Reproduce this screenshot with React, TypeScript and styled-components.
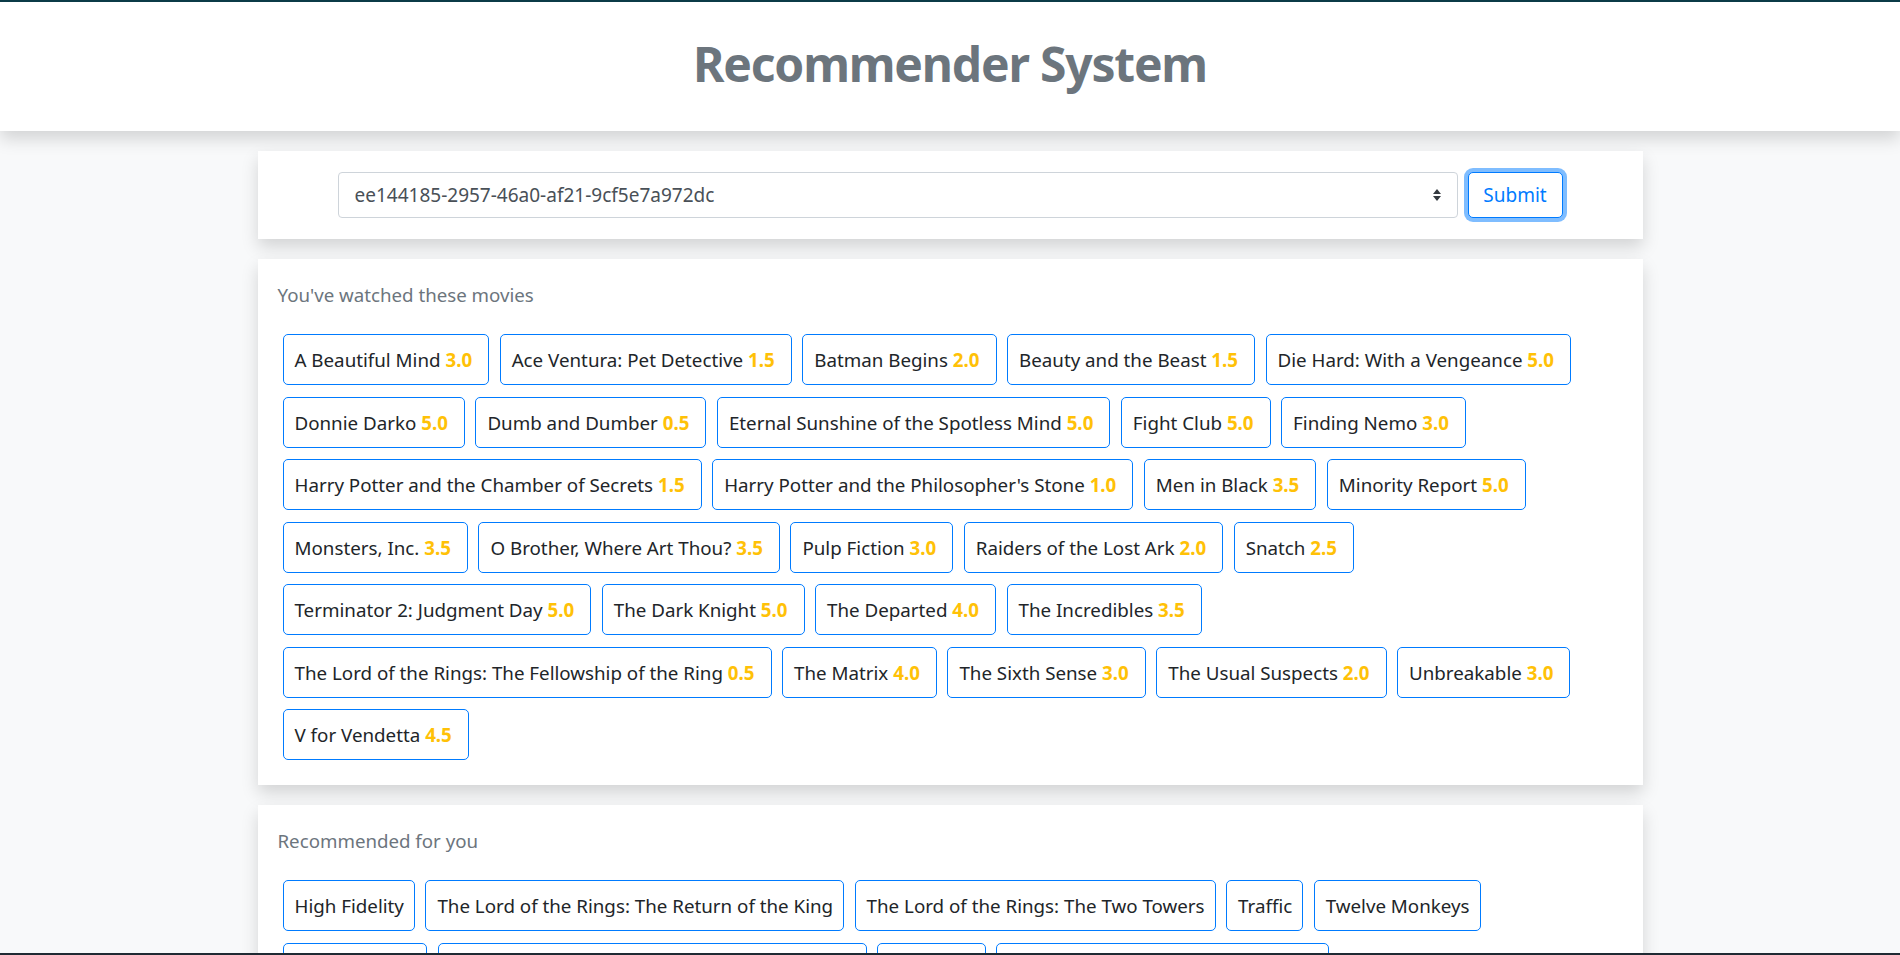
import styled, { createGlobalStyle } from "styled-components";

const GlobalStyle = createGlobalStyle`
    html, body {
        margin: 0;
        padding: 0;
        background: #f8f9fa;
        font-family: "Noto Sans", "Open Sans", sans-serif;
        color: #212529;
    }
    * { box-sizing: border-box; }
`;

type Movie = { title: string; rating?: string };

const watched: Movie[] = [
    { title: "A Beautiful Mind", rating: "3.0" },
    { title: "Ace Ventura: Pet Detective", rating: "1.5" },
    { title: "Batman Begins", rating: "2.0" },
    { title: "Beauty and the Beast", rating: "1.5" },
    { title: "Die Hard: With a Vengeance", rating: "5.0" },
    { title: "Donnie Darko", rating: "5.0" },
    { title: "Dumb and Dumber", rating: "0.5" },
    { title: "Eternal Sunshine of the Spotless Mind", rating: "5.0" },
    { title: "Fight Club", rating: "5.0" },
    { title: "Finding Nemo", rating: "3.0" },
    { title: "Harry Potter and the Chamber of Secrets", rating: "1.5" },
    { title: "Harry Potter and the Philosopher's Stone", rating: "1.0" },
    { title: "Men in Black", rating: "3.5" },
    { title: "Minority Report", rating: "5.0" },
    { title: "Monsters, Inc.", rating: "3.5" },
    { title: "O Brother, Where Art Thou?", rating: "3.5" },
    { title: "Pulp Fiction", rating: "3.0" },
    { title: "Raiders of the Lost Ark", rating: "2.0" },
    { title: "Snatch", rating: "2.5" },
    { title: "Terminator 2: Judgment Day", rating: "5.0" },
    { title: "The Dark Knight", rating: "5.0" },
    { title: "The Departed", rating: "4.0" },
    { title: "The Incredibles", rating: "3.5" },
    { title: "The Lord of the Rings: The Fellowship of the Ring", rating: "0.5" },
    { title: "The Matrix", rating: "4.0" },
    { title: "The Sixth Sense", rating: "3.0" },
    { title: "The Usual Suspects", rating: "2.0" },
    { title: "Unbreakable", rating: "3.0" },
    { title: "V for Vendetta", rating: "4.5" },
];

const recommended: Movie[] = [
    { title: "High Fidelity" },
    { title: "The Lord of the Rings: The Return of the King" },
    { title: "The Lord of the Rings: The Two Towers" },
    { title: "Traffic" },
    { title: "Twelve Monkeys" },
    { title: "Forrest Gump" },
    { title: "Star Wars: Episode V - The Empire Strikes Back" },
    { title: "Memento" },
    { title: "Indiana Jones and the Last Crusade" },
];

const Header = styled.header`
    background: #fff;
    border-top: 2px solid #0b3b47;
    height: 131px;
    padding-bottom: 6px;
    display: flex;
    align-items: center;
    justify-content: center;
    box-shadow: 0 0.5rem 1rem rgba(0, 0, 0, 0.15);
    margin-bottom: 20px;
`;

const Title = styled.h1`
    margin: 0;
    font-size: 48px;
    font-weight: 700;
    color: #6c757d;
    letter-spacing: -1.2px;
`;

const Main = styled.main`
    width: 1385px;
    margin: 0 auto;
    display: flex;
    flex-direction: column;
    gap: 20px;
`;

const Card = styled.section`
    background: #fff;
    padding: 20px;
    box-shadow: 0 0.5rem 1rem rgba(0, 0, 0, 0.15);
`;

const PickForm = styled.form`
    width: 1225px;
    margin: 0 auto;
    display: flex;
    gap: 10px;
    padding: 1px 0;
`;

const SelectWrap = styled.div`
    position: relative;
    flex: 1;
`;

const UserSelect = styled.select`
    appearance: none;
    width: 100%;
    height: 46px;
    padding: 0 40px 0 16px;
    font-family: inherit;
    font-size: 19px;
    color: #495057;
    background: #fff;
    border: 1px solid #ced4da;
    border-radius: 4px;
    outline: none;
`;

const SelectArrow = styled.svg`
    position: absolute;
    right: 17px;
    top: 50%;
    transform: translateY(-50%);
    pointer-events: none;
`;

const SubmitButton = styled.button`
    width: 95px;
    height: 46px;
    font-family: inherit;
    font-size: 19px;
    color: #007bff;
    background: #fff;
    border: 1px solid #007bff;
    border-radius: 5px;
    box-shadow: 0 0 0 4px rgba(0, 123, 255, 0.5);
    cursor: pointer;
`;

const CardTitle = styled.h6`
    margin: 0 0 26px;
    padding-top: 2px;
    font-size: 18.7px;
    line-height: 27px;
    font-weight: 400;
    color: #6c757d;
`;

const ChipList = styled.div`
    display: flex;
    flex-wrap: wrap;
    gap: 11.5px 10.5px;
    padding: 0 5px 5px;
`;

const Chip = styled.span<{ $rated: boolean }>`
    display: inline-block;
    height: 51px;
    padding: 0 ${({ $rated }) => ($rated ? 16 : 10)}px 0 11px;
    font-size: 18.75px;
    line-height: 49px;
    white-space: nowrap;
    border: 1px solid #007bff;
    border-radius: 5px;
    color: #212529;
`;

const Rating = styled.b`
    color: #ffc107;
    font-weight: 700;
`;

const BottomEdge = styled.div`
    position: fixed;
    left: 0;
    right: 0;
    bottom: 0;
    height: 2px;
    background: #1f2a33;
`;

const MovieChips = ({ movies }: { movies: Movie[] }) => (
    <ChipList>
        {movies.map((m) => (
            <Chip key={m.title} $rated={!!m.rating}>
                {m.title}
                {m.rating && <> <Rating>{m.rating}</Rating></>}
            </Chip>
        ))}
    </ChipList>
);

export default function App() {
    return <>
        <GlobalStyle />
        <Header>
            <Title>Recommender System</Title>
        </Header>
        <Main>
            <Card>
                <PickForm onSubmit={(e) => e.preventDefault()}>
                    <SelectWrap>
                        <UserSelect defaultValue="ee144185-2957-46a0-af21-9cf5e7a972dc">
                            <option>ee144185-2957-46a0-af21-9cf5e7a972dc</option>
                        </UserSelect>
                        <SelectArrow width="8" height="12" viewBox="0 0 8 12">
                            <path d="M4 0L8 5H0z M4 12L0 7h8z" fill="#343a40" />
                        </SelectArrow>
                    </SelectWrap>
                    <SubmitButton type="submit">Submit</SubmitButton>
                </PickForm>
            </Card>
            <Card>
                <CardTitle>You've watched these movies</CardTitle>
                <MovieChips movies={watched} />
            </Card>
            <Card>
                <CardTitle>Recommended for you</CardTitle>
                <MovieChips movies={recommended} />
            </Card>
        </Main>
        <BottomEdge />
    </>;
}
